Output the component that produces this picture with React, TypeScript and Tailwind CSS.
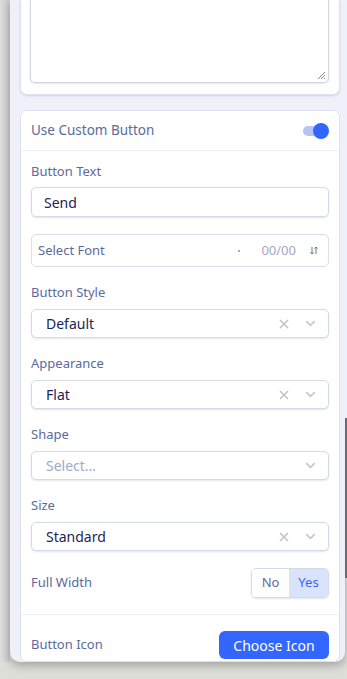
import { X, ChevronDown } from "lucide-react";

const font = { fontFamily: '"Noto Sans", "Open Sans", sans-serif' };

function Label({ children }: { children: React.ReactNode }) {
  return (
    <div className="h-[18px] text-[13px] leading-[18px] text-[#5b6a9c]">
      {children}
    </div>
  );
}

function Select({ value, placeholder }: { value?: string; placeholder?: string }) {
  return (
    <div className="mt-[8px] h-[29px] flex items-center rounded-[5px] border border-[#d6d9e7] bg-white shadow-[0_1px_2px_rgba(40,50,100,0.12)] pl-[14px] pr-[10px]">
      <span
        className={`flex-1 text-[14px] ${value ? "text-[#1c2556]" : "text-[#a0a8c6]"}`}
      >
        {value || placeholder}
      </span>
      {value && <X className="w-[14px] h-[14px] text-[#c6c6c6] mr-[12px]" strokeWidth={3} />}
      <ChevronDown className="w-[15px] h-[15px] text-[#c6c6c6]" strokeWidth={2.5} />
    </div>
  );
}

export default function App() {
  return (
    <div
      className="w-[347px] h-[679px] overflow-hidden flex bg-gradient-to-b from-[#c9c9c5] to-[#deded9]"
      style={font}
    >
      {/* left strip */}
      <div className="w-[10px] h-[662px] bg-gradient-to-r from-[#dedede] to-[#c8c8c8]" />

      {/* panel */}
      <div className="w-[335px] h-[662px] flex flex-col overflow-hidden bg-[#eef1f9] rounded-b-[10px] shadow-[0_4px_8px_rgba(0,0,0,0.25)] pl-[10px] pr-[5px]">
        {/* textarea card (scrolled) */}
        <div className="h-[95px] shrink-0 flex flex-col justify-end bg-white border-x border-b border-[#dde1ee] rounded-b-[7px] shadow-[0_1px_2px_rgba(40,50,100,0.15)] pl-[9px] pr-[10px] pb-[11px]">
          <div className="relative h-[83px] rounded-b-[5px] border-x border-b border-[#d3d5e2] shadow-[0_1px_2px_rgba(40,50,100,0.12)]">
            <svg
              className="absolute right-[2px] bottom-[2px]"
              width="9"
              height="9"
              viewBox="0 0 9 9"
            >
              <path d="M8 1L1 8M8 4L4 8M8 7L7 8" stroke="#8a8a8a" strokeWidth="1" />
            </svg>
          </div>
        </div>

        {/* button card */}
        <div className="mt-[15px] flex-1 bg-white border border-[#dde1ee] rounded-[7px]">
          <div className="h-[40px] flex items-center justify-between px-[10px] border-b border-[#eceef5]">
            <span className="text-[13.5px] text-[#5b6a9c]">Use Custom Button</span>
            <div className="relative w-[26px] h-[16px] flex items-center">
              <div className="w-[22px] h-[10px] rounded-full bg-[#b6c4f6]" />
              <div className="absolute right-0 top-0 w-[16px] h-[16px] rounded-full bg-[#3366ff]" />
            </div>
          </div>

          <div className="px-[10px] pt-[11px]">
            <Label>Button Text</Label>
            <div className="mt-[7px] h-[30px] flex items-center rounded-[5px] border border-[#d6d9e7] shadow-[0_1px_2px_rgba(40,50,100,0.12)] px-[12px] text-[14px] text-[#1c2556]">
              Send
            </div>

            <div className="mt-[17px] h-[33px] flex items-center rounded-[5px] border border-[#dcdfea] pl-[6px] pr-[10px]">
              <span className="flex-1 text-[13px] text-[#5b6a9c]">Select Font</span>
              <span className="w-[2px] h-[2px] rounded-full bg-[#8a93b6] mr-[21px]" />
              <span className="text-[13px] text-[#a0a8c6] mr-[14px]">00/00</span>
              <svg width="8" height="9" viewBox="0 0 8 9" fill="none" stroke="#6b7280" strokeWidth="1">
                <path d="M2 1V8M0.5 6.5L2 8L3.5 6.5" />
                <path d="M6 8V1M4.5 2.5L6 1L7.5 2.5" />
              </svg>
            </div>

            <div className="mt-[16px]">
              <Label>Button Style</Label>
              <Select value="Default" />
            </div>
            <div className="mt-[16px]">
              <Label>Appearance</Label>
              <Select value="Flat" />
            </div>
            <div className="mt-[16px]">
              <Label>Shape</Label>
              <Select placeholder="Select..." />
            </div>
            <div className="mt-[16px]">
              <Label>Size</Label>
              <Select value="Standard" />
            </div>

            <div className="mt-[17px] h-[30px] flex items-center justify-between">
              <span className="text-[13px] text-[#5b6a9c]">Full Width</span>
              <div className="flex h-[30px] rounded-[5px] border border-[#d6d9e7] overflow-hidden shadow-[0_1px_2px_rgba(40,50,100,0.12)] text-[13px]">
                <div className="w-[37px] flex items-center justify-center text-[#5b6a9c] bg-white">No</div>
                <div className="w-[39px] flex items-center justify-center text-[#3b63f0] bg-[#d9e3fc]">Yes</div>
              </div>
            </div>
          </div>

          <div className="mt-[16px] border-t border-[#eceef5] px-[10px] pt-[16px] flex items-center justify-between">
            <span className="text-[13px] text-[#5b6a9c]">Button Icon</span>
            <div className="w-[110px] h-[28px] rounded-[6px] bg-[#3366ff] flex items-center justify-center text-[14px] text-white">
              Choose Icon
            </div>
          </div>
        </div>
      </div>

      {/* page scrollbar */}
      <div className="w-[2px] h-[662px] flex flex-col">
        <div className="h-[418px] bg-[#eef1f9]" />
        <div className="h-[160px] bg-[#6b6b6b]" />
      </div>
    </div>
  );
}
